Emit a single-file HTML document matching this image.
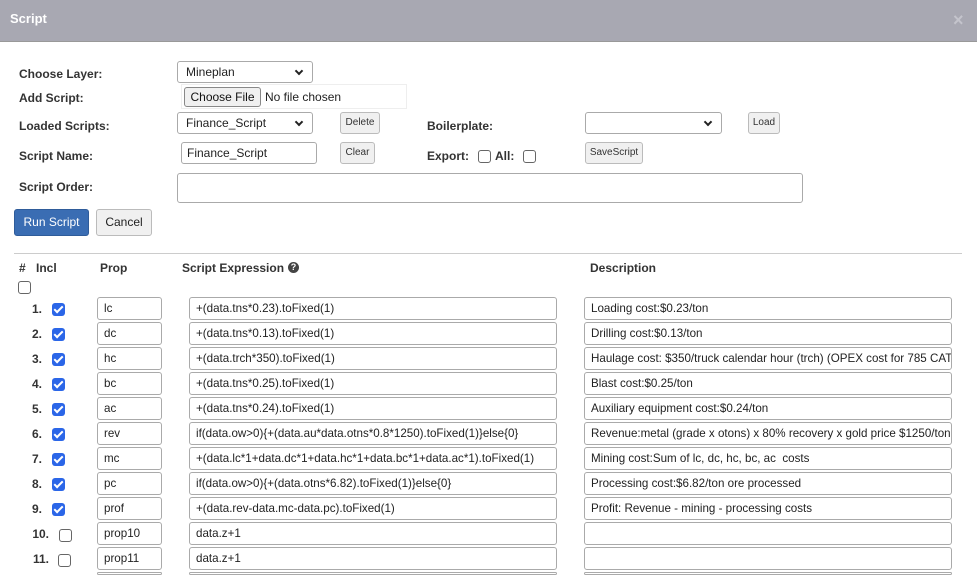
<!DOCTYPE html>
<html style="overflow:hidden;height:575px"><head><style>
*{box-sizing:border-box}
body{margin:0;width:977px;height:575px;overflow:hidden;background:#fff;font-family:"Liberation Sans",Arial,sans-serif;font-size:12px;color:#222;position:relative}
.a{position:absolute}
.hdr{left:0;top:0;width:977px;height:42px;background:#a8a8b2;border-bottom:1px solid #999}
.lbl{font-weight:bold;font-size:12px;color:#333}
.sel,.inp{position:absolute;border:1px solid #aaa;border-radius:3px;background:#fff;font-size:12px;padding:0 8px;line-height:20px;height:22px}
.sel:after{content:"";position:absolute;right:10px;top:6px;width:4px;height:4px;border-right:2px solid #222;border-bottom:2px solid #222;transform:rotate(45deg)}
.btn{position:absolute;border:1px solid #bbb;border-radius:3px;background:#f0f0f0;font-size:10px;text-align:center;line-height:20px;height:22px;color:#333}
.cb{position:absolute;width:13px;height:13px;border:1px solid #666;border-radius:3px;background:#fff}
.cbc{position:absolute;width:13px;height:13px;border-radius:3px;background:#2b66e8}
.cbc:after{content:"";position:absolute;left:4px;top:1px;width:3px;height:7px;border-right:2px solid #fff;border-bottom:2px solid #fff;transform:rotate(45deg)}
.num{position:absolute;width:30px;text-align:right;font-weight:bold;font-size:12px;color:#333}
.ri{position:absolute;border:1px solid #aaa;border-radius:3px;height:23px;font-size:11.6px;padding:0 4px 0 6px;line-height:21px;white-space:nowrap;overflow:hidden;background:#fff}
</style></head><body>
<div class="a hdr"></div>
<div class="a" style="left:10px;top:11px;color:#fff;font-weight:bold;font-size:13px">Script</div>
<div class="a" style="left:953px;top:10px;color:#c4c4cc;font-weight:bold;font-size:18px">×</div>

<div class="a lbl" style="left:19px;top:67px">Choose Layer:</div>
<div class="a lbl" style="left:19px;top:91px">Add Script:</div>
<div class="a lbl" style="left:19px;top:119px">Loaded Scripts:</div>
<div class="a lbl" style="left:19px;top:149px">Script Name:</div>
<div class="a lbl" style="left:19px;top:180px">Script Order:</div>

<div class="sel" style="left:177px;top:61px;width:136px">Mineplan</div>
<div class="a" style="left:181px;top:84px;width:226px;height:25px;border:1px solid #eee"></div>
<div class="btn" style="left:184px;top:87px;width:77px;height:20px;font-size:12px;line-height:18px;color:#111;border-color:#888">Choose File</div>
<div class="a" style="left:265px;top:90px;font-size:12px">No file chosen</div>
<div class="sel" style="left:177px;top:112px;width:136px">Finance_Script</div>
<div class="btn" style="left:340px;top:112px;width:40px">Delete</div>
<div class="inp" style="left:181px;top:142px;width:136px;padding-left:5px">Finance_Script</div>
<div class="btn" style="left:340px;top:142px;width:35px">Clear</div>
<div class="a lbl" style="left:427px;top:119px">Boilerplate:</div>
<div class="sel" style="left:585px;top:112px;width:137px"></div>
<div class="btn" style="left:748px;top:112px;width:32px">Load</div>
<div class="a lbl" style="left:427px;top:149px">Export:</div>
<div class="cb" style="left:478px;top:150px"></div>
<div class="a lbl" style="left:495px;top:149px">All:</div>
<div class="cb" style="left:523px;top:150px"></div>
<div class="btn" style="left:585px;top:142px;width:58px">SaveScript</div>
<div class="inp" style="left:177px;top:173px;width:626px;height:30px"></div>

<div class="a" style="left:14px;top:209px;width:75px;height:27px;background:#3a6db3;border:1px solid #2f5c9a;border-radius:3px;color:#fff;font-size:12px;text-align:center;line-height:25px">Run Script</div>
<div class="a" style="left:96px;top:209px;width:56px;height:27px;background:#f0f0f0;border:1px solid #bbb;border-radius:3px;font-size:12px;text-align:center;line-height:25px">Cancel</div>

<div class="a" style="left:14px;top:253px;width:948px;height:1px;background:#ccc"></div>
<div class="a lbl" style="left:19px;top:261px">#</div>
<div class="a lbl" style="left:36px;top:261px">Incl</div>
<div class="a lbl" style="left:100px;top:261px">Prop</div>
<div class="a lbl" style="left:182px;top:261px">Script Expression</div>
<div class="a" style="left:288px;top:262px;width:11px;height:11px;border-radius:50%;background:#444;color:#fff;font-size:9px;font-weight:bold;text-align:center;line-height:11px">?</div>
<div class="a lbl" style="left:590px;top:261px">Description</div>
<div class="cb" style="left:18px;top:281px"></div>

<div class="num" style="left:12px;top:302px">1.</div><div class="cbc" style="left:52px;top:303px"></div>
<div class="ri" style="left:97px;top:297px;width:65px">lc</div><div class="ri" style="left:189px;top:297px;width:368px">+(data.tns*0.23).toFixed(1)</div><div class="ri" style="left:584px;top:297px;width:368px">Loading cost:$0.23/ton</div>

<div class="num" style="left:12px;top:327px">2.</div><div class="cbc" style="left:52px;top:328px"></div>
<div class="ri" style="left:97px;top:322px;width:65px">dc</div><div class="ri" style="left:189px;top:322px;width:368px">+(data.tns*0.13).toFixed(1)</div><div class="ri" style="left:584px;top:322px;width:368px">Drilling cost:$0.13/ton</div>

<div class="num" style="left:12px;top:352px">3.</div><div class="cbc" style="left:52px;top:353px"></div>
<div class="ri" style="left:97px;top:347px;width:65px">hc</div><div class="ri" style="left:189px;top:347px;width:368px">+(data.trch*350).toFixed(1)</div><div class="ri" style="left:584px;top:347px;width:368px">Haulage cost: $350/truck calendar hour (trch) (OPEX cost for 785 CAT</div>

<div class="num" style="left:12px;top:377px">4.</div><div class="cbc" style="left:52px;top:378px"></div>
<div class="ri" style="left:97px;top:372px;width:65px">bc</div><div class="ri" style="left:189px;top:372px;width:368px">+(data.tns*0.25).toFixed(1)</div><div class="ri" style="left:584px;top:372px;width:368px">Blast cost:$0.25/ton</div>

<div class="num" style="left:12px;top:402px">5.</div><div class="cbc" style="left:52px;top:403px"></div>
<div class="ri" style="left:97px;top:397px;width:65px">ac</div><div class="ri" style="left:189px;top:397px;width:368px">+(data.tns*0.24).toFixed(1)</div><div class="ri" style="left:584px;top:397px;width:368px">Auxiliary equipment cost:$0.24/ton</div>

<div class="num" style="left:12px;top:427px">6.</div><div class="cbc" style="left:52px;top:428px"></div>
<div class="ri" style="left:97px;top:422px;width:65px">rev</div><div class="ri" style="left:189px;top:422px;width:368px">if(data.ow&gt;0){+(data.au*data.otns*0.8*1250).toFixed(1)}else{0}</div><div class="ri" style="left:584px;top:422px;width:368px">Revenue:metal (grade x otons) x 80% recovery x gold price $1250/ton</div>

<div class="num" style="left:12px;top:452px">7.</div><div class="cbc" style="left:52px;top:453px"></div>
<div class="ri" style="left:97px;top:447px;width:65px">mc</div><div class="ri" style="left:189px;top:447px;width:368px">+(data.lc*1+data.dc*1+data.hc*1+data.bc*1+data.ac*1).toFixed(1)</div><div class="ri" style="left:584px;top:447px;width:368px">Mining cost:Sum of lc, dc, hc, bc, ac&nbsp; costs</div>

<div class="num" style="left:12px;top:477px">8.</div><div class="cbc" style="left:52px;top:478px"></div>
<div class="ri" style="left:97px;top:472px;width:65px">pc</div><div class="ri" style="left:189px;top:472px;width:368px">if(data.ow&gt;0){+(data.otns*6.82).toFixed(1)}else{0}</div><div class="ri" style="left:584px;top:472px;width:368px">Processing cost:$6.82/ton ore processed</div>

<div class="num" style="left:12px;top:502px">9.</div><div class="cbc" style="left:52px;top:503px"></div>
<div class="ri" style="left:97px;top:497px;width:65px">prof</div><div class="ri" style="left:189px;top:497px;width:368px">+(data.rev-data.mc-data.pc).toFixed(1)</div><div class="ri" style="left:584px;top:497px;width:368px">Profit: Revenue - mining - processing costs</div>

<div class="num" style="left:19px;top:527px">10.</div><div class="cb" style="left:59px;top:529px"></div>
<div class="ri" style="left:97px;top:522px;width:65px">prop10</div><div class="ri" style="left:189px;top:522px;width:368px">data.z+1</div><div class="ri" style="left:584px;top:522px;width:368px"></div>

<div class="num" style="left:19px;top:552px">11.</div><div class="cb" style="left:58px;top:554px"></div>
<div class="ri" style="left:97px;top:547px;width:65px">prop11</div><div class="ri" style="left:189px;top:547px;width:368px">data.z+1</div><div class="ri" style="left:584px;top:547px;width:368px"></div>

<div class="ri" style="left:97px;top:572px;width:65px;height:3px"></div><div class="ri" style="left:189px;top:572px;width:368px;height:3px"></div><div class="ri" style="left:584px;top:572px;width:368px;height:3px"></div>
</body></html>
